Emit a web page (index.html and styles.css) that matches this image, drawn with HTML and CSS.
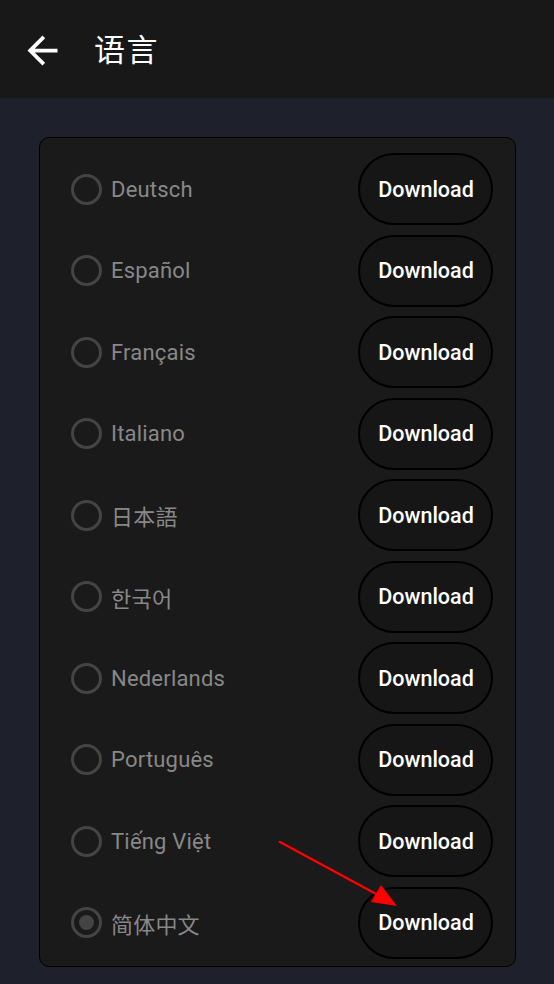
FILE: index.html
```html
<!DOCTYPE html>
<html lang="zh">
<head>
<meta charset="utf-8">
<link rel="stylesheet" href="styles.css">
</head>
<body>
<div class="app">
  <header class="topbar">
    <svg class="back" viewBox="0 0 24 24" width="45" height="45"><path fill="#fff" d="M20 11H7.83l5.59-5.59L12 4l-8 8 8 8 1.41-1.41L7.83 13H20v-2z"/></svg>
    <h1 class="title">语言</h1>
  </header>
  <main class="content">
    <div class="card">
      <div class="row"><span class="radio"></span><span class="label">Deutsch</span><button class="dl">Download</button></div>
      <div class="row"><span class="radio"></span><span class="label">Español</span><button class="dl">Download</button></div>
      <div class="row"><span class="radio"></span><span class="label">Français</span><button class="dl">Download</button></div>
      <div class="row"><span class="radio"></span><span class="label">Italiano</span><button class="dl">Download</button></div>
      <div class="row"><span class="radio"></span><span class="label">日本語</span><button class="dl">Download</button></div>
      <div class="row"><span class="radio"></span><span class="label">한국어</span><button class="dl">Download</button></div>
      <div class="row"><span class="radio"></span><span class="label">Nederlands</span><button class="dl">Download</button></div>
      <div class="row"><span class="radio"></span><span class="label">Português</span><button class="dl">Download</button></div>
      <div class="row"><span class="radio"></span><span class="label">Tiếng Việt</span><button class="dl">Download</button></div>
      <div class="row"><span class="radio checked"></span><span class="label">简体中文</span><button class="dl">Download</button></div>
    </div>
  </main>
  <svg class="pointer" width="554" height="984" viewBox="0 0 554 984">
    <line x1="280" y1="842" x2="378" y2="895" stroke="#ff0000" stroke-width="2.5" stroke-linecap="round"/>
    <polygon points="397,906 371,902 381,885" fill="#ff0000"/>
  </svg>
</div>
</body>
</html>
```
FILE: styles.css
```css
* { box-sizing: border-box; }
html, body { margin: 0; padding: 0; }
body {
  width: 554px;
  height: 984px;
  background: #1e202c;
  font-family: Roboto, "Noto Sans CJK SC", sans-serif;
  overflow: hidden;
}
.app { position: relative; width: 554px; height: 984px; }
.topbar {
  height: 98px;
  background: #181818;
  display: flex;
  align-items: center;
  padding-left: 20px;
}
.back { display: block; margin-top: 2px; }
.title {
  margin: 0 0 4px 29px;
  color: #fff;
  font-family: "Noto Sans CJK SC", sans-serif;
  font-size: 31px;
  font-weight: 400;
  letter-spacing: 1.5px;
  line-height: 1;
}
.content { padding: 39px 39px 0 39px; }
.card {
  width: 477px;
  height: 830px;
  background: #1a1a1a;
  border: 1px solid #000;
  border-radius: 10px;
  padding: 15px 22px 7px 31px;
  display: flex;
  flex-direction: column;
  gap: 9.5px;
}
.row {
  display: flex;
  align-items: center;
  height: 72px;
}
.radio {
  width: 31px;
  height: 31px;
  border: 3px solid #444;
  border-radius: 50%;
  flex: none;
  position: relative;
}
.radio.checked::after {
  content: "";
  position: absolute;
  left: 50%; top: 50%;
  width: 15px; height: 15px;
  margin: -7.5px 0 0 -7.5px;
  border-radius: 50%;
  background: #444;
}
.label {
  margin-left: 9px;
  color: #888;
  font-size: 22px;
  letter-spacing: 0.2px;
  font-family: Roboto, "Noto Sans CJK SC", "Noto Sans CJK KR", sans-serif;
  flex: 1;
}
.dl {
  width: 135px;
  height: 72px;
  border: 2px solid #000;
  border-radius: 36px;
  background: #161616;
  color: #fff;
  font-family: Roboto, sans-serif;
  font-size: 21.5px;
  font-weight: 500;
  padding: 0 0 0 1px;
  flex: none;
}
.pointer { position: absolute; left: 0; top: 0; pointer-events: none; }
```
